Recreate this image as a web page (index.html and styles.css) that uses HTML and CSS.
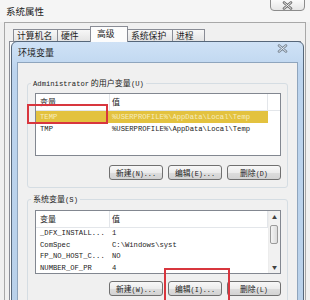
FILE: index.html
```html
<!DOCTYPE html>
<html lang="zh-CN">
<head>
    <meta charset="UTF-8">
    <meta name="viewport" content="width=device-width, initial-scale=1.0">
    <title>系统属性</title>
    <link rel="stylesheet" href="styles.css">
</head>
<body>
    <div class="sys-window">
        <div class="sys-title">
            <span>系统属性</span>
            <div class="close-btn">
                <svg width="11" height="9" viewBox="0 0 11 9">
                    <path d="M2 1.5 L9 7.5 M9 1.5 L2 7.5" stroke="#6d6d6d" stroke-width="2.6" stroke-linecap="round"/>
                    <path d="M2 1.5 L9 7.5 M9 1.5 L2 7.5" stroke="#f4f4f4" stroke-width="1" stroke-linecap="round"/>
                </svg>
            </div>
        </div>
        <div class="sys-client">
            <div class="tabs">
                <div class="tab w44">计算机名</div>
                <div class="tab w33">硬件</div>
                <div class="tab active">高级</div>
                <div class="tab w44">系统保护</div>
                <div class="tab w33">进程</div>
            </div>
            <div class="tab-panel"></div>
        </div>

        <div class="env-dialog">
            <div class="env-title">
                <span>环境变量</span>
                <svg class="env-close" width="11" height="9" viewBox="0 0 11 9">
                    <path d="M2 1.5 L9 7.5 M9 1.5 L2 7.5" stroke="#7b8896" stroke-width="2.6" stroke-linecap="round"/>
                    <path d="M2 1.5 L9 7.5 M9 1.5 L2 7.5" stroke="#e4eef8" stroke-width="1" stroke-linecap="round"/>
                </svg>
            </div>
            <div class="env-body">
                <fieldset class="group group-user">
                    <legend><span class="mono">Administrator</span> 的用户变量<span class="mono">(U)</span></legend>
                    <div class="list list-user">
                        <div class="list-inner">
                            <div class="list-head">
                                <div class="c-name">变量</div>
                                <div class="c-value">值</div>
                                <div class="c-fill"></div>
                            </div>
                            <div class="row selected">
                                <div class="c-name mono">TEMP</div>
                                <div class="c-value mono">%USERPROFILE%\AppData\Local\Temp</div>
                            </div>
                            <div class="row">
                                <div class="c-name mono">TMP</div>
                                <div class="c-value mono">%USERPROFILE%\AppData\Local\Temp</div>
                            </div>
                        </div>
                    </div>
                    <div class="buttons">
                        <button class="btn" type="button">新建<span class="mono">(N)...</span></button>
                        <button class="btn" type="button">编辑<span class="mono">(E)...</span></button>
                        <button class="btn" type="button">删除<span class="mono">(D)</span></button>
                    </div>
                </fieldset>

                <fieldset class="group group-system">
                    <legend>系统变量<span class="mono">(S)</span></legend>
                    <div class="list list-system">
                        <div class="list-inner">
                            <div class="list-head">
                                <div class="c-name">变量</div>
                                <div class="c-value">值</div>
                                <div class="c-fill"></div>
                            </div>
                            <div class="row">
                                <div class="c-name mono">_DFX_INSTALL...</div>
                                <div class="c-value mono">1</div>
                            </div>
                            <div class="row">
                                <div class="c-name mono">ComSpec</div>
                                <div class="c-value mono">C:\Windows\syst</div>
                            </div>
                            <div class="row">
                                <div class="c-name mono">FP_NO_HOST_C...</div>
                                <div class="c-value mono">NO</div>
                            </div>
                            <div class="row">
                                <div class="c-name mono">NUMBER_OF_PR</div>
                                <div class="c-value mono">4</div>
                            </div>
                        </div>
                        <div class="scrollbar">
                            <div class="sb-arrow">&#9650;</div>
                            <div class="sb-track"><div class="sb-thumb"></div></div>
                            <div class="sb-arrow">&#9660;</div>
                        </div>
                    </div>
                    <div class="buttons">
                        <button class="btn" type="button">新建<span class="mono">(W)...</span></button>
                        <button class="btn" type="button">编辑<span class="mono">(I)...</span></button>
                        <button class="btn" type="button">删除<span class="mono">(L)</span></button>
                    </div>
                </fieldset>
            </div>
        </div>

        <!-- 标注框 -->
        <div class="mark mark-temp"></div>
        <div class="mark mark-edit"></div>
    </div>
</body>
</html>
```

FILE: styles.css
```css
body {
    margin: 0;
    width: 310px;
    height: 300px;
    overflow: hidden;
    background: #f0f0f0;
    font-family: "Noto Sans CJK SC", sans-serif;
    font-size: 8px;
    color: #1b1b1b;
}
.mono {
    font-family: "Liberation Mono", "Noto Sans CJK SC", monospace;
    font-size: 7.2px;
}
.sys-window {
    position: relative;
    width: 310px;
    height: 300px;
}
.sys-title {
    height: 22px;
    padding-left: 6px;
    display: flex;
    align-items: center;
    background: #f5f5f5;
    font-size: 9.5px;
}
.close-btn {
    position: absolute;
    top: -1px;
    right: 5px;
    width: 35px;
    height: 12px;
    box-sizing: border-box;
    border: 1px solid #8c8c8c;
    border-radius: 0 0 4px 4px;
    background: linear-gradient(#fafafa, #e6e6e6);
    display: flex;
    align-items: center;
    justify-content: center;
}
.sys-client {
    margin-left: 4px;
    width: 302px;
    height: 278px;
    box-sizing: border-box;
    border: 1px solid #a8a8a8;
    border-bottom: none;
    padding: 6px 4px 0 4px;
    background: #f0f0f0;
}
.tabs {
    height: 12px;
    padding-left: 4px;
    display: flex;
    align-items: flex-end;
    position: relative;
    z-index: 1;
}
.tab {
    height: 12px;
    box-sizing: border-box;
    padding-left: 3px;
    border: 1px solid #898c95;
    border-bottom: none;
    border-right: none;
    background: linear-gradient(#f7f7f7, #e4e4e4);
    font-size: 8.8px;
    line-height: 11px;
    white-space: nowrap;
}
.tab.w44 { width: 44px; }
.tab.w33 { width: 33px; }
.tab:last-child { border-right: 1px solid #898c95; }
.tab.active {
    width: 38px;
    height: 16px;
    margin-bottom: -1px;
    padding-left: 6px;
    background: #fcfcfc;
    border-right: 1px solid #898c95;
    line-height: 14px;
}
.tab.active + .tab { border-left: none; }
.tab-panel {
    height: 260px;
    border: 1px solid #898c95;
    background: #fcfcfc;
}
.env-dialog {
    position: absolute;
    left: 11px;
    top: 41px;
    width: 293px;
    height: 265px;
    box-sizing: border-box;
    padding: 0 5px;
    border: 1px solid #56677a;
    border-radius: 6px 6px 0 0;
    background: linear-gradient(#cfe2f6, #bcd4ee 30px, #b9d1ea);
    display: flex;
    flex-direction: column;
}
.env-title {
    height: 20px;
    flex-shrink: 0;
    padding-left: 1px;
    display: flex;
    align-items: center;
    justify-content: space-between;
    font-size: 9px;
}
.env-close {
    margin-right: 10px;
    margin-top: -7px;
}
.env-body {
    flex: 1;
    border: 1px solid #8fa5bd;
    background: #f0f0f0;
    overflow: hidden;
}
.group {
    margin: 14px 9px 0 9px;
    padding: 3px 6px 7px 7px;
    border: 1px solid #d5dde3;
    border-radius: 3px;
    min-width: 0;
}
.group legend {
    margin-left: -4px;
    padding: 0 2px;
    line-height: 12px;
    font-size: 8px;
}
.group-system {
    margin-top: 5px;
    padding-top: 4px;
}
.list {
    display: flex;
    border: 1px solid #828790;
    background: #fff;
    overflow: hidden;
    box-sizing: border-box;
}
.list-user { height: 63px; }
.list-system { height: 64px; }
.list-inner {
    flex: 1;
    min-width: 0;
}
.list-head {
    height: 17px;
    box-sizing: border-box;
    display: flex;
    border-bottom: 1px solid #e3e6ea;
    line-height: 16px;
}
.list-head .c-name { border-right: 1px solid #e3e6ea; }
.list-head .c-value { border-right: 1px solid #e3e6ea; }
.c-name {
    width: 74px;
    flex-shrink: 0;
    padding-left: 4px;
    box-sizing: border-box;
    white-space: nowrap;
    overflow: hidden;
}
.c-value {
    width: 158px;
    flex-shrink: 0;
    padding-left: 2px;
    box-sizing: border-box;
    white-space: nowrap;
    overflow: hidden;
}
.c-fill { flex: 1; }
.row {
    height: 12px;
    display: flex;
    line-height: 12px;
}
.list-system .row { height: 11.5px; line-height: 11.5px; }
.row.selected {
    width: 232px;
    background: #e3c23f;
    color: #f7edbf;
}
.scrollbar {
    width: 11px;
    flex-shrink: 0;
    display: flex;
    flex-direction: column;
    background: #f1f1f1;
    border-left: 1px solid #ececec;
}
.sb-arrow {
    height: 12px;
    font-size: 5px;
    line-height: 12px;
    text-align: center;
    color: #404040;
}
.sb-track {
    flex: 1;
    padding-top: 2px;
}
.sb-thumb {
    width: 8px;
    height: 19px;
    margin-left: 1px;
    box-sizing: border-box;
    border: 1px solid #9a9a9a;
    border-radius: 2px;
    background: linear-gradient(90deg, #f4f4f4, #dcdcdc);
}
.buttons {
    display: flex;
    justify-content: flex-end;
    gap: 5px;
    margin-top: 9px;
}
.group-system .buttons { margin-top: 7px; }
.btn {
    width: 54px;
    height: 15px;
    padding: 0;
    border: 1px solid #707070;
    border-radius: 3px;
    background: linear-gradient(#f8f8f8, #ececec 50%, #dddddd 51%, #d3d3d3);
    font-family: "Noto Sans CJK SC", sans-serif;
    font-size: 7.8px;
    line-height: 13px;
    color: #1b1b1b;
}
.btn .mono { font-size: 6.8px; }
.mark {
    position: absolute;
    border: 2px solid #d8363e;
}
.mark-temp {
    left: 27px;
    top: 104px;
    width: 77px;
    height: 16px;
}
.mark-edit {
    left: 164px;
    top: 268px;
    width: 62px;
    height: 40px;
}
```
